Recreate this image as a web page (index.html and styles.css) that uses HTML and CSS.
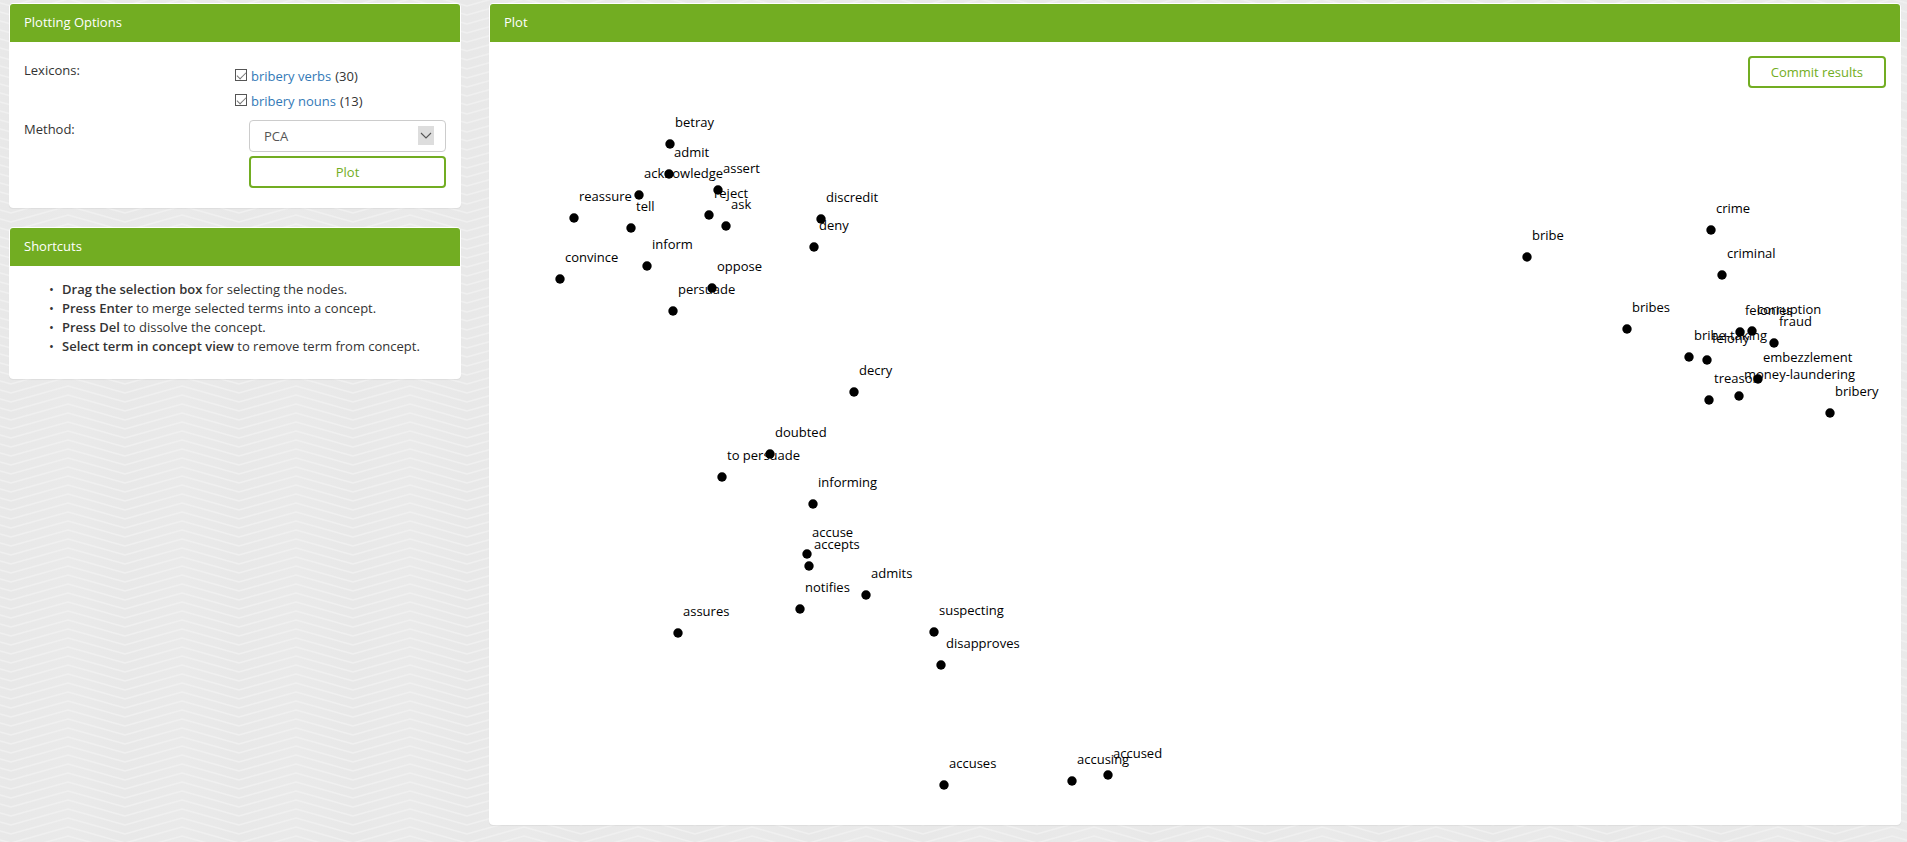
FILE: index.html
```html
<!DOCTYPE html>
<html lang="en">
<head>
<meta charset="utf-8">
<title>Plot</title>
<link rel="stylesheet" href="styles.css">
</head>
<body>
<div class="layout">
  <aside class="sidebar">
    <section class="panel">
      <h2 class="panel-title">Plotting Options</h2>
      <form class="options">
        <span class="option-label">Lexicons:</span>
        <ul class="lexicons">
          <li><input type="checkbox" class="check" id="verbs" aria-label="bribery verbs" checked><a href="#verbs">bribery verbs</a><span>(30)</span></li>
          <li><input type="checkbox" class="check" id="nouns" aria-label="bribery nouns" checked><a href="#nouns">bribery nouns</a><span>(13)</span></li>
        </ul>
        <label class="option-label" for="method">Method:</label>
        <div class="method">
          <div class="select-wrap">
            <select id="method" class="select"><option>PCA</option></select>
            <svg class="select-arrow" viewBox="0 0 16 19" aria-hidden="true"><path d="M3 7 8 12l5-5" fill="none" stroke="#555" stroke-width="1.100"/></svg>
          </div>
          <button type="button" class="button">Plot</button>
        </div>
      </form>
    </section>
    <section class="panel">
      <h2 class="panel-title">Shortcuts</h2>
      <ul class="shortcuts">
        <li><b>Drag the selection box</b> for selecting the nodes.</li>
        <li><b>Press Enter</b> to merge selected terms into a concept.</li>
        <li><b>Press Del</b> to dissolve the concept.</li>
        <li><b>Select term in concept view</b> to remove term from concept.</li>
      </ul>
    </section>
  </aside>
  <main class="panel plot-panel">
    <h2 class="panel-title">Plot</h2>
    <div class="plot-body">
      <button type="button" class="button commit">Commit results</button>
      <svg class="plot" id="plot" role="img" aria-label="Term scatter plot"></svg>
    </div>
  </main>
</div>
<script src="plot.js"></script>
</body>
</html>
```
FILE: styles.css
```css
* { box-sizing: border-box; }
body {
  margin: 0;
  min-height: 100vh;
  color: #333;
  font: 13px/18px "Open Sans", sans-serif;
  background-color: #e9e9e9;
  background-image:
    url("data:image/svg+xml,%3Csvg xmlns='http://www.w3.org/2000/svg' width='114' height='9'%3E%3Cg fill='none' stroke='%23f0f0f0' stroke-width='1.500'%3E%3Cpath d='M-46-19 11-3 68-19 125-3M-46-10 11 6 68-10 125 6M-46-1 11 15 68-1 125 15M-46 8 11 24 68 8 125 24'/%3E%3C/g%3E%3C/svg%3E"),
    linear-gradient(90deg, #e8e8e8, #eaeaea 50%, #e8e8e8);
  background-size: 114px 9px, 114px 100%;
  background-position: 0 0, 11px 0;
}
a { color: #337ab7; text-decoration: none; }
b { font-weight: 600; }
ul { margin: 0; padding: 0; }
.layout {
  display: grid;
  grid-template-columns: 113fr 353fr;
  gap: 28px;
  align-items: start;
  padding: 3px 6px 17px 9px;
}
.sidebar { display: grid; gap: 19px; }
.panel {
  background: #fff;
  border: 1px solid #fff;
  border-radius: 4px;
  box-shadow: 0 1px 1px rgba(0, 0, 0, .05);
}
.panel-title {
  margin: 0;
  padding: 9px 14px 11px;
  border-radius: 3px 3px 0 0;
  background: #72ad22;
  color: #fff;
  font-size: 13px;
  font-weight: 400;
}
.options {
  display: grid;
  grid-template-columns: 1fr 1fr;
  row-gap: 6px;
  padding: 19px 14px;
}
.lexicons { list-style: none; padding-top: 3px; }
.lexicons li { display: flex; gap: 4px; line-height: 25px; }
.check {
  appearance: none;
  flex: none;
  width: 12px;
  height: 12px;
  margin: 5px 0 0;
  border: 1px solid #555;
  background: #fff;
}
.check:checked::before {
  content: "";
  display: block;
  width: 8px;
  height: 4px;
  margin: 2px 0 0 1px;
  border: solid #777;
  border-width: 0 0 1px 1px;
  transform: rotate(-45deg);
}
.method { display: grid; gap: 4px; padding-left: 14px; }
.select-wrap { position: relative; }
.select {
  appearance: none;
  display: block;
  width: 100%;
  height: 32px;
  padding: 0 14px;
  border: 1px solid #ccc;
  border-radius: 4px;
  background: #fff;
  color: #555;
  font: inherit;
}
.select-arrow {
  position: absolute;
  top: 6px;
  right: 12px;
  width: 16px;
  height: 19px;
  background: #ddd;
  pointer-events: none;
}
.button {
  height: 32px;
  padding: 0 21px;
  border: 2px solid #72ad22;
  border-radius: 4px;
  background: #fff;
  color: #72ad22;
  font: inherit;
}
.shortcuts { padding: 14px 14px 22px 52px; line-height: 19px; list-style: none; }
.shortcuts li::before {
  content: "•";
  float: left;
  margin-left: -13px;
}
.plot-body { position: relative; }
.commit { position: absolute; top: 14px; right: 14px; }
.plot { display: block; width: 100%; height: 782px; }
.term { font: 13px "Open Sans", sans-serif; fill: #000; }
```
FILE: plot.js
```js
const terms = [
  ["betray", 180, 102], ["admit", 179, 132], ["acknowledge", 149, 153],
  ["assert", 228, 148], ["reject", 219, 173], ["ask", 236, 184],
  ["reassure", 84, 176], ["tell", 141, 186], ["discredit", 331, 177],
  ["deny", 324, 205], ["inform", 157, 224], ["convince", 70, 237],
  ["oppose", 222, 246], ["persuade", 183, 269], ["decry", 364, 350],
  ["doubted", 280, 412], ["to persuade", 232, 435], ["informing", 323, 462],
  ["accuse", 317, 512], ["accepts", 319, 524], ["admits", 376, 553],
  ["notifies", 310, 567], ["assures", 188, 591], ["suspecting", 444, 590],
  ["disapproves", 451, 623], ["accuses", 454, 743], ["accusing", 582, 739],
  ["accused", 618, 733], ["bribe", 1037, 215], ["crime", 1221, 188],
  ["criminal", 1232, 233], ["bribes", 1137, 287], ["felonies", 1250, 290],
  ["corruption", 1262, 289], ["fraud", 1284, 301], ["bribe-taking", 1199, 315],
  ["felony", 1217, 318], ["embezzlement", 1268, 337], ["treason", 1219, 358],
  ["money-laundering", 1249, 354], ["bribery", 1340, 371]
];
const plot = document.getElementById("plot");
function add(name, attributes) {
  const node = document.createElementNS("http://www.w3.org/2000/svg", name);
  for (const key in attributes) node.setAttribute(key, attributes[key]);
  plot.appendChild(node);
  return node;
}
for (const [word, x, y] of terms) {
  add("text", { class: "term", x: x + 5, y: y - 17 }).textContent = word;
}
for (const [, x, y] of terms) add("circle", { cx: x, cy: y, r: 4.7 });
```
